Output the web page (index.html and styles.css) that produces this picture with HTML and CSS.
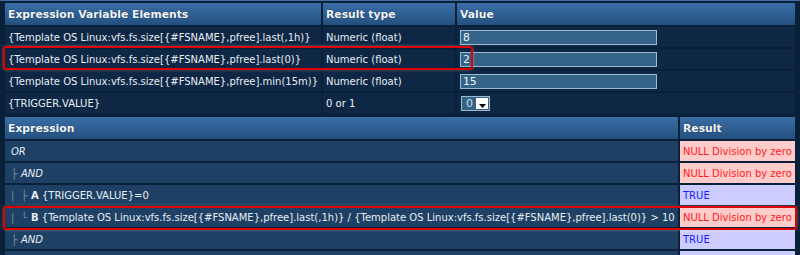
FILE: index.html
```html
<!DOCTYPE html>
<html lang="en">
<head>
  <meta charset="UTF-8" />
  <title>Test expression</title>
  <link rel="stylesheet" href="styles.css">
</head>
<body>
  <div class="top-strip"></div>

  <!-- Variable elements -->
  <table class="grid vars">
    <colgroup>
      <col class="c-expr" />
      <col class="c-type" />
      <col class="c-val" />
    </colgroup>
    <tr class="head">
      <th>Expression Variable Elements</th>
      <th>Result type</th>
      <th>Value</th>
    </tr>
    <tr>
      <td>{Template OS Linux:vfs.fs.size[{#FSNAME},pfree].last(,1h)}</td>
      <td>Numeric (float)</td>
      <td><input type="text" class="val" value="8" /></td>
    </tr>
    <tr>
      <td>{Template OS Linux:vfs.fs.size[{#FSNAME},pfree].last(0)}</td>
      <td>Numeric (float)</td>
      <td><input type="text" class="val" value="2" /></td>
    </tr>
    <tr>
      <td>{Template OS Linux:vfs.fs.size[{#FSNAME},pfree].min(15m)}</td>
      <td>Numeric (float)</td>
      <td><input type="text" class="val" value="15" /></td>
    </tr>
    <tr>
      <td>{TRIGGER.VALUE}</td>
      <td>0 or 1</td>
      <td>
        <span class="select"><span class="select-val">0</span><span class="select-btn"><svg width="7" height="4" viewBox="0 0 7 4"><path d="M0 0h7L3.5 4z" fill="#000"/></svg></span></span>
      </td>
    </tr>
  </table>

  <!-- Expression tree -->
  <table class="grid tree">
    <colgroup>
      <col class="c-exp" />
      <col class="c-res" />
    </colgroup>
    <tr class="head">
      <th>Expression</th>
      <th>Result</th>
    </tr>
    <tr>
      <td><i>OR</i></td>
      <td class="res-null">NULL Division by zero</td>
    </tr>
    <tr>
      <td><span class="br">&#9500;</span><i>AND</i></td>
      <td class="res-null">NULL Division by zero</td>
    </tr>
    <tr>
      <td><span class="br">|</span><span class="br">&#9500;</span><b>A</b> {TRIGGER.VALUE}=0</td>
      <td class="res-true">TRUE</td>
    </tr>
    <tr>
      <td><span class="br">|</span><span class="br">&#9492;</span><b>B</b> {Template OS Linux:vfs.fs.size[{#FSNAME},pfree].last(,1h)} / {Template OS Linux:vfs.fs.size[{#FSNAME},pfree].last(0)} &gt; 10</td>
      <td class="res-null">NULL Division by zero</td>
    </tr>
    <tr>
      <td><span class="br">&#9500;</span><i>AND</i></td>
      <td class="res-true">TRUE</td>
    </tr>
    <tr>
      <td>&nbsp;</td>
      <td class="res-true">&nbsp;</td>
    </tr>
  </table>

  <!-- Annotation marks -->
  <div class="mark mark-1"></div>
  <div class="mark mark-2"></div>
</body>
</html>
```

FILE: styles.css
```css
body {
  margin: 0;
  background-color: #082038;
  font-family: "DejaVu Sans", Verdana, sans-serif;
  font-size: 10px;
  color: #e8eef5;
  position: relative;
  height: 255px;
  overflow: hidden;
}
.top-strip {
  height: 1px;
  background-color: #3d6d9c;
}
.grid {
  border-collapse: separate;
  border-spacing: 2px;
  margin-left: 3px;
  width: 794px;
  table-layout: fixed;
}
.grid th,
.grid td {
  height: 20px;
  padding: 0 3px;
  text-align: left;
  white-space: nowrap;
  overflow: hidden;
  box-sizing: border-box;
}
.grid .head th {
  height: 22px;
  font-weight: bold;
  font-size: 10.8px;
  color: #f2f6fa;
  background: linear-gradient(#3a6ea6, #24507f);
  text-shadow: 0 0 1px #0d2540;
}
.vars td {
  background-color: #0e2744;
}
.c-expr { width: 316px; }
.c-type { width: 132px; }
.c-val { width: auto; }
.c-exp { width: auto; }
.c-res { width: 115px; }

input.val {
  display: block;
  width: 197px;
  height: 15px;
  box-sizing: border-box;
  margin: 0;
  padding: 0 2px;
  border: 1px solid #9cb9cf;
  background-color: #336487;
  color: #f0f4f8;
  font-family: inherit;
  font-size: 10.8px;
  line-height: 13px;
}
.select {
  display: inline-flex;
  align-items: center;
  height: 15px;
  width: 29px;
  margin-left: 1px;
  box-sizing: border-box;
  border: 1px solid #9cb9cf;
  background-color: #336487;
  vertical-align: middle;
}
.select-val {
  flex: 1;
  padding-left: 4px;
  font-size: 11px;
  color: #c8daea;
}
.select-btn {
  width: 12px;
  height: 11px;
  margin-right: 1px;
  background-color: #fff;
  display: flex;
  align-items: flex-end;
  justify-content: center;
  padding-bottom: 1px;
  box-sizing: border-box;
}

.tree {
  margin-top: 0;
}
.tree td {
  background-color: #1e4064;
  padding-left: 6px;
}
.tree i {
  font-style: italic;
}
.tree b {
  font-weight: bold;
}
.br {
  color: #7d8fa2;
  display: inline-block;
  width: 10px;
}
.tree td.res-null {
  background-color: #ffcccc;
  color: #ff1a1a;
  padding-left: 3px;
}
.tree td.res-true {
  background-color: #ccccff;
  color: #1a1aff;
  padding-left: 3px;
}

.mark {
  position: absolute;
  border: 2px solid #e00000;
  border-radius: 3px;
  box-shadow: 0 0 3px rgba(255, 255, 255, 0.35);
  box-sizing: border-box;
}
.mark-1 {
  left: 3px;
  top: 46px;
  width: 470px;
  height: 24px;
}
.mark-2 {
  left: 3px;
  top: 206px;
  width: 794px;
  height: 24px;
}
```
